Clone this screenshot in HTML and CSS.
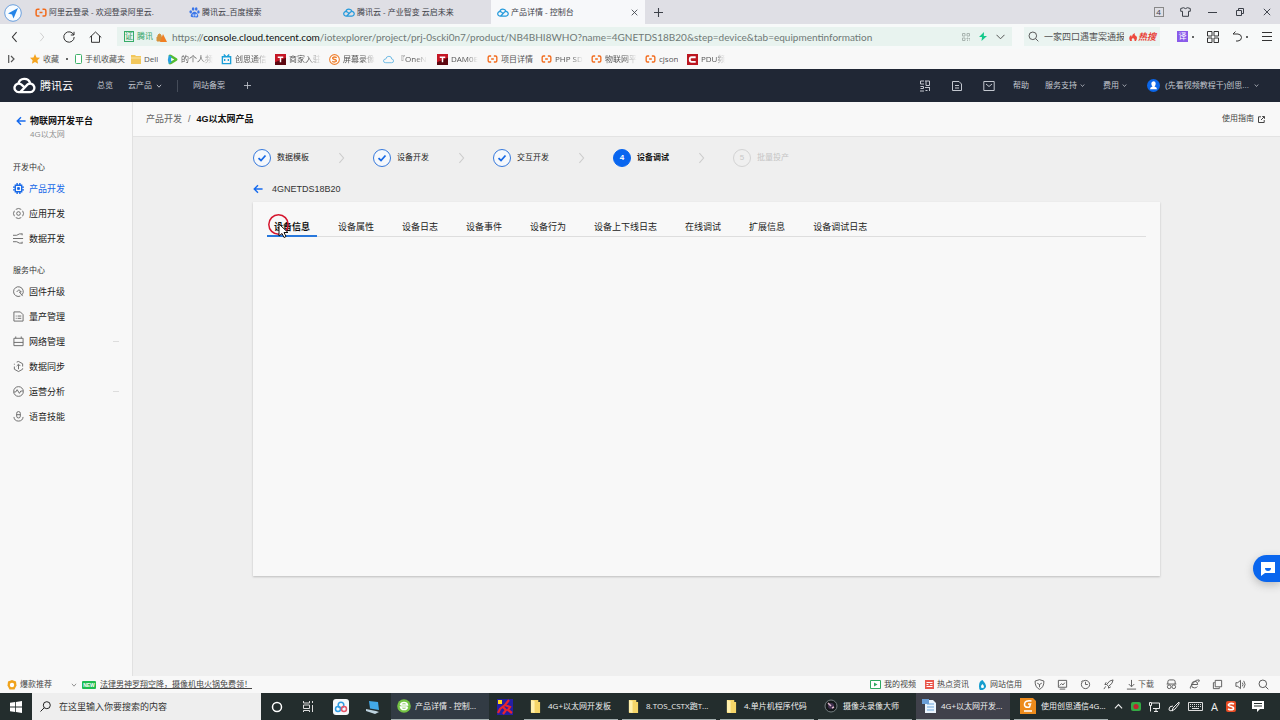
FILE: index.html
```html
<!DOCTYPE html>
<html lang="zh-CN">
<head>
<meta charset="utf-8">
<title>产品详情 - 控制台</title>
<link rel="stylesheet" href="styles.css">
</head>
<body>
<svg class="sprite" aria-hidden="true">
  <symbol id="ali" viewBox="0 0 16 12"><path d="M6 1.5H3.5Q1.5 1.5 1.5 3.5v5q0 2 2 2H6M10 1.5h2.500q2 0 2 2v5q0 2-2 2H10M6 6h4" fill="none" stroke="#f26a1b" stroke-width="2"/></symbol>
  <symbol id="cloud" viewBox="0 0 24 18"><path d="M6 16h12a4.500 4.500 0 1 0-2.500-8.300L8 15.500M6 16a4.500 4.500 0 1 1 2.500-8.200L12 11M5.500 7A6.500 6.500 0 0 1 18 6.500" fill="none" stroke="currentColor" stroke-width="2.500" stroke-linecap="round"/></symbol>
  <symbol id="paw" viewBox="0 0 16 16"><g fill="#3b76e8"><ellipse cx="2.500" cy="7" rx="1.900" ry="2.400"/><ellipse cx="6" cy="3" rx="1.900" ry="2.500"/><ellipse cx="10.500" cy="3" rx="1.900" ry="2.500"/><ellipse cx="13.700" cy="7.200" rx="1.800" ry="2.300"/><path d="M8 7c3 0 5.500 4 5.500 6s-2 2.500-5.500 2-5.500 0-5.500-2S5 7 8 7z"/></g><path d="M6 10v3h1.500M9 10v3h2v-3" fill="none" stroke="#fff"/></symbol>
  <symbol id="chev" viewBox="0 0 10 10"><path d="M1.500 3l3.500 4 3.500-4" fill="none" stroke="currentColor" stroke-width="1.500"/></symbol>
  <symbol id="next" viewBox="0 0 10 16"><path d="M2 1l6 7-6 7" fill="none" stroke="currentColor" stroke-width="1.500"/></symbol>
  <symbol id="prev" viewBox="0 0 10 16"><path d="M8 1L2 8l6 7" fill="none" stroke="currentColor" stroke-width="1.500"/></symbol>
  <symbol id="x" viewBox="0 0 10 10"><path d="M1 1l8 8M9 1L1 9" stroke="currentColor" stroke-width="1.200"/></symbol>
  <symbol id="plus" viewBox="0 0 10 10"><path d="M5 0v10M0 5h10" stroke="currentColor" stroke-width="1.200"/></symbol>
  <symbol id="find" viewBox="0 0 16 16"><circle cx="7" cy="7" r="5.500" fill="none" stroke="currentColor" stroke-width="1.400"/><path d="M11 11l4 4" stroke="currentColor" stroke-width="1.400"/></symbol>
  <symbol id="arrow" viewBox="0 0 12 12"><path d="M11.500 6H1.500M6 1.500L1.500 6 6 10.500" fill="none" stroke="currentColor" stroke-width="1.700"/></symbol>
  <symbol id="check" viewBox="0 0 12 12"><path d="M2.500 6.200L5 8.500l4.500-5" fill="none" stroke="currentColor" stroke-width="1.800"/></symbol>
  <symbol id="folder" viewBox="0 0 12 14"><path d="M1 0h8v2h2v12H1z" fill="#f5d568"/><path d="M1 0l4 1v13l-4-1z" fill="#fff0ad"/></symbol>
  <symbol id="redt" viewBox="0 0 12 12"><path d="M0 0h12v12H0z" fill="#c51625"/><path d="M0 9l12-5v8H0z" fill="#5d0710"/><path d="M3 3.500h6M6 3v6" stroke="#fff" stroke-width="1.600"/></symbol>
</svg>

<header class="tabstrip">
  <span class="avatar-logo"><svg viewBox="0 0 18 18" width="18" height="18"><circle cx="9" cy="9" r="8.300" fill="#f7fbff" stroke="#6ba0de"/><path d="M14 4L4 9.500l4 1 1.500 4z" fill="#2384e8"/></svg></span>
  <nav class="tabs">
    <a class="tab" href="#"><svg width="12" height="9"><use href="#ali"/></svg>阿里云登录 - 欢迎登录阿里云.</a>
    <a class="tab" href="#"><svg width="11" height="11"><use href="#paw"/></svg>腾讯云_百度搜索</a>
    <a class="tab blue" href="#"><svg width="12" height="9"><use href="#cloud"/></svg><span>腾讯云 - 产业智变 云启未来</span></a>
    <a class="tab blue current" href="#"><svg width="12" height="9"><use href="#cloud"/></svg><span>产品详情 - 控制台</span><svg class="close" width="7" height="7"><use href="#x"/></svg></a>
  </nav>
  <button class="cell" aria-label="新标签页"><svg width="9" height="9"><use href="#plus"/></svg></button>
  <div class="window-tools">
    <button class="cell"><span class="count">4</span></button>
    <button class="cell" aria-label="皮肤"><svg width="11" height="10" viewBox="0 0 11 10"><path d="M3.500.7L.7 1.500v2.800h1.800v5h6v-5h1.800V1.500L7.500.7Q5.500 2.500 3.500.7z" fill="none" stroke="currentColor"/></svg></button>
    <button class="cell" aria-label="最小化"><svg width="9" height="9" viewBox="0 0 9 9"><path d="M0 4.500h9" stroke="currentColor"/></svg></button>
    <button class="cell" aria-label="还原"><svg width="8" height="8" viewBox="0 0 8 8"><path d="M.5 2.500h5v5h-5zM2.500 2V.5h5v5H6" fill="none" stroke="currentColor"/></svg></button>
    <button class="cell" aria-label="关闭"><svg width="8" height="8"><use href="#x"/></svg></button>
  </div>
</header>

<div class="toolbar">
  <button class="cell" aria-label="后退"><svg width="7" height="12"><use href="#prev"/></svg></button>
  <button class="cell faint" aria-label="前进"><svg width="6" height="10"><use href="#next"/></svg></button>
  <button class="cell" aria-label="刷新"><svg width="12" height="12" viewBox="0 0 12 12"><path d="M10.800 4A5.200 5.200 0 1 0 11.200 6M11 .8V4H7.800" fill="none" stroke="currentColor"/></svg></button>
  <button class="cell" aria-label="主页"><svg width="13" height="12" viewBox="0 0 13 12"><path d="M.7 6.500L6.500 1l5.800 5.500M2.500 5v6.300h8V5" fill="none" stroke="currentColor"/></svg></button>
  <div class="address">
    <span class="cert">证</span><span class="owner">腾讯</span>
    <svg width="11" height="10" viewBox="0 0 11 10"><path d="M1 5h5v4H1zM2 5V3q1.500-2 3 0v2" fill="#d5923c" stroke="#d5923c"/><path d="M7 2l4 8H4z" fill="#f07f23"/></svg>
    <span class="url">https://<b>console.cloud.tencent.com</b>/iotexplorer/project/prj-0scki0n7/product/NB4BHI8WHO?name=4GNETDS18B20&amp;step=device&amp;tab=equipmentinformation</span>
    <span class="address-tools">
      <svg width="8" height="8" viewBox="0 0 8 8"><path d="M.5.5h2.500v2.500H.5zM5 .5h2.500v2.500H5zM.5 5h2.500v2.500H.5zM5 5h1v1H5zM7 7h1M5 7.500h1M7 5.500h1" fill="none" stroke="#a9b4b0"/></svg>
      <svg width="8" height="9" viewBox="0 0 8 9"><path d="M5 0L0 5h3L2.500 9 8 4H4.800z" fill="#16c98c"/></svg>
      <svg width="9" height="6" viewBox="0 0 9 6"><path d="M.5.8l4 4 4-4" fill="none" stroke="#555"/></svg>
    </span>
  </div>
  <label class="search"><svg width="11" height="11"><use href="#find"/></svg><input type="text" value="一家四口遇害案通报" aria-label="搜索"><span class="hot"><svg width="8" height="8" viewBox="0 0 8 8"><path d="M1 8Q-1 4 2 2l1 2Q3 1 6 0q-1 2 1 3t0 5H5.500Q6 6 4 5 2 6 3 8z" fill="#ed4a3d"/></svg>热搜</span></label>
  <div class="toolset">
    <button class="cell"><span class="translate">译</span><i class="dot"></i></button>
    <button class="cell" aria-label="应用"><svg width="12" height="12" viewBox="0 0 12 12"><path d="M.5.5h4.500v4.500H.5zM7 .5h4.500v4.500H7zM.5 7h4.500v4.500H.5zM7 7h4.500v4.500H7z" fill="none" stroke="currentColor"/></svg></button>
    <button class="cell" aria-label="恢复"><svg width="10" height="11" viewBox="0 0 10 11"><path d="M3.500.5L1 3h5q3.500.5 3.500 3.500T6 10H4" fill="none" stroke="currentColor"/></svg><i class="dot"></i></button>
    <button class="cell" aria-label="菜单"><svg width="10" height="9" viewBox="0 0 10 9"><path d="M0 .5h10M0 4.500h10M0 8.500h10" stroke="currentColor"/></svg></button>
  </div>
</div>

<nav class="bookmarks">
  <span class="expand"><svg width="7" height="8" viewBox="0 0 7 8"><path d="M.7 0v8M3 1l3 3-3 3" fill="none" stroke="currentColor" stroke-width="1.200"/></svg></span>
  <a class="bm w45" href="#"><svg width="10" height="10" viewBox="0 0 10 10"><path d="M5 0l1.500 3.400 3.500.4-2.600 2.400.7 3.600L5 8 1.900 9.800l.7-3.600L0 3.800l3.500-.4z" fill="#f5a41f"/></svg><span>收藏</span><i class="dot"></i></a>
  <a class="bm w56" href="#"><svg width="7" height="10" viewBox="0 0 7 10"><rect x=".5" y=".5" width="6" height="9" rx="1" fill="#fff" stroke="#40b26a"/></svg><span>手机收藏夹</span></a>
  <a class="bm w36" href="#"><svg width="10" height="9" viewBox="0 0 10 9"><path d="M0 0h4l1 1h5v8H0z" fill="#f2c75c"/><path d="M0 3h10" stroke="#fbe5a4"/></svg><span>Dell</span></a>
  <a class="bm" href="#"><svg width="11" height="11" viewBox="0 0 12 12"><path d="M2 1q1-1 3 0l6 4q1 1 0 2l-6 4q-2 1-3 0z" fill="#55bd30"/><path d="M2 1Q0 6 2 11l3-2V3z" fill="#289fe0"/><path d="M4.500 4L8 6 4.500 8z" fill="#fff"/></svg><span class="fade">的个人频</span></a>
  <a class="bm" href="#"><svg width="11" height="11" viewBox="0 0 12 12"><path d="M3 .5l2 2M9 .5l-2 2M1.500 3h9v7.500h-9zM4 5.500v2M8 5.500v2" fill="none" stroke="#1b9fd8" stroke-width="1.500"/></svg><span class="fade">创思通信</span></a>
  <a class="bm" href="#"><svg width="11" height="11"><use href="#redt"/></svg><span class="fade">商家入驻</span></a>
  <a class="bm" href="#"><svg width="11" height="11" viewBox="0 0 12 12"><circle cx="6" cy="6" r="5.300" fill="#fff" stroke="#ee8131" stroke-width="1.200"/><path d="M8.500 4Q6 2.500 4 4q-.5 1.500 2 2t2 2Q6 9.500 3.500 8" fill="none" stroke="#ee8131" stroke-width="1.400"/></svg><span class="fade">屏幕录像</span></a>
  <a class="bm" href="#"><svg width="11" height="9" viewBox="0 0 12 9"><path d="M3 8Q.5 8 .5 6T3 4q.5-3 3.500-3T9.500 4q2 0 2 2t-2 2z" fill="none" stroke="#68b7e3"/></svg><span class="fade">『OneN</span></a>
  <a class="bm w50" href="#"><svg width="11" height="11"><use href="#redt"/></svg><span class="fade">DAM0E</span></a>
  <a class="bm" href="#"><svg width="11" height="8"><use href="#ali"/></svg><span>项目详情</span></a>
  <a class="bm w50" href="#"><svg width="11" height="8"><use href="#ali"/></svg><span class="fade">PHP SD</span></a>
  <a class="bm" href="#"><svg width="11" height="8"><use href="#ali"/></svg><span class="fade">物联网平</span></a>
  <a class="bm w42" href="#"><svg width="11" height="8"><use href="#ali"/></svg><span>cjson</span></a>
  <a class="bm w50" href="#"><svg width="11" height="11" viewBox="0 0 12 12"><path d="M0 0h12v12H0z" fill="#bb1620"/><path d="M9.500 3.500H5Q3 3.500 3 6t2 2.500h4.500" fill="none" stroke="#fff" stroke-width="2"/></svg><span class="fade">PDU频</span></a>
</nav>

<header class="console">
  <a class="brand" href="#"><svg width="23" height="17"><use href="#cloud"/></svg>腾讯云</a>
  <nav class="console-nav">
    <a href="#">总览</a>
    <a href="#">云产品<svg width="6" height="6"><use href="#chev"/></svg></a>
    <span class="bar"></span>
    <a href="#">网站备案</a>
    <a class="more" href="#" aria-label="添加"><svg width="7" height="7"><use href="#plus"/></svg></a>
  </nav>
  <div class="account">
    <a class="pic" href="#"><svg width="12" height="12" viewBox="0 0 12 12"><path d="M5 1H1.500v3H5M1.500 6.500h3v2h-3M1 11h4M6 1h4.500v4.500H7V1M6 7.500h5M10.500 8v3M6.500 10.500h2" fill="none" stroke="currentColor"/></svg></a>
    <a class="pic" href="#"><svg width="12" height="12" viewBox="0 0 12 12"><path d="M1.500 1.500H8L10.500 4v6.500h-9zM4 5.500h4M4 8h4" fill="none" stroke="currentColor"/></svg></a>
    <a class="pic" href="#"><svg width="12" height="12" viewBox="0 0 12 12"><path d="M.8 1.500h10.400v9H.8zM3 4l3 2.500L9 4" fill="none" stroke="currentColor"/></svg></a>
    <a href="#">帮助</a>
    <a class="support" href="#">服务支持<svg width="5" height="5"><use href="#chev"/></svg></a>
    <a class="cost" href="#">费用<svg width="5" height="5"><use href="#chev"/></svg></a>
    <a class="user" href="#"><svg width="13" height="13" viewBox="0 0 13 13"><circle cx="6.500" cy="6.500" r="6.500" fill="#0b66e8"/><path d="M6.500 2.200q2.200 0 2.200 2.300T7.500 7.400Q10 8 10 10.200H3Q3 8 5.500 7.400 4.300 6.500 4.300 4.500T6.500 2.200z" fill="#fff"/></svg>(先看视频教程干)创思...<svg width="5" height="5"><use href="#chev"/></svg></a>
  </div>
</header>

<div class="workspace">
  <aside class="sidebar">
    <a class="platform" href="#"><svg width="10" height="10"><use href="#arrow"/></svg>物联网开发平台</a>
    <p class="project">4G以太网</p>
    <h2>开发中心</h2>
    <ul>
      <li><a class="on" href="#"><svg viewBox="0 0 12 12"><path d="M2.500 2.500h7v7h-7zM4.500 0v2M7.500 0v2M4.500 10v2M7.500 10v2M0 4.500h2M0 7.500h2M10 4.500h2M10 7.500h2" fill="none" stroke="currentColor" stroke-width="1.500"/><path d="M5 5h2v2H5z" fill="currentColor"/></svg>产品开发</a></li>
      <li><a href="#"><svg viewBox="0 0 12 12"><circle cx="6" cy="6" r="2"/><path d="M3 1.500Q6-.5 9 1.500M3 10.500q3 2 6 0M1.500 3Q-.5 6 1.500 9M10.500 3q2 3 0 6"/></svg>应用开发</a></li>
      <li><a href="#"><svg viewBox="0 0 12 12"><path d="M0 2.500h4L7 1h3M0 6h11M0 9.500h4L7 11h3M10 .5v2M10 9.500v2"/></svg>数据开发</a></li>
    </ul>
    <h2>服务中心</h2>
    <ul>
      <li><a href="#"><svg viewBox="0 0 12 12"><path d="M10 9.500A5.300 5.300 0 1 0 8 11M4 6.500L6.500 4 9 6.500H7L10.500 11"/></svg>固件升级</a></li>
      <li><a href="#"><svg viewBox="0 0 12 12"><path d="M1 1h7l3 3v7H1zM3 5.500h1M5 5.500h4M3 8h1M5 8h4"/></svg>量产管理</a></li>
      <li><a href="#"><svg viewBox="0 0 12 12"><path d="M1 2.500h10v8H1zM3 .5v2M9 .5v2M1 7h10"/></svg>网络管理<i></i></a></li>
      <li><a href="#"><svg viewBox="0 0 12 12"><path d="M4 1.200L6 .5l4.500 2.500v3M10.500 8v1L6 11.500 1.500 9V6M1.500 4V3M6 9V4M4 5.500l2-2 2 2"/></svg>数据同步</a></li>
      <li><a href="#"><svg viewBox="0 0 12 12"><circle cx="6" cy="6" r="5.300"/><path d="M1 6.500h2L4.500 4 7 8l1.500-2.500H11"/></svg>运营分析<i></i></a></li>
      <li><a href="#"><svg viewBox="0 0 12 12"><rect x="4" y=".6" width="4" height="7" rx="2"/><path d="M1 6.500Q1.500 11 6 11t5-4.500M4 4h4"/></svg>语音技能</a></li>
    </ul>
  </aside>

  <main>
    <div class="crumbs"><a href="#">产品开发</a><span>/</span><strong>4G以太网产品</strong><a class="guide" href="#">使用指南<svg width="7" height="7" viewBox="0 0 7 7"><path d="M3 .8H.5v5.700h5.700V4M3 4L6.200.8M4.200.5h2.300v2.300" fill="none" stroke="currentColor"/></svg></a></div>
    <div class="content">
      <ol class="steps">
        <li><span class="ring"><svg width="12" height="12"><use href="#check"/></svg></span>数据模板<svg class="sep" width="7" height="12"><use href="#next"/></svg></li>
        <li><span class="ring"><svg width="12" height="12"><use href="#check"/></svg></span>设备开发<svg class="sep" width="7" height="12"><use href="#next"/></svg></li>
        <li><span class="ring"><svg width="12" height="12"><use href="#check"/></svg></span>交互开发<svg class="sep" width="7" height="12"><use href="#next"/></svg></li>
        <li class="active"><span class="ring">4</span>设备调试<svg class="sep" width="7" height="12"><use href="#next"/></svg></li>
        <li class="pending"><span class="ring">5</span>批量投产</li>
      </ol>
      <a class="device" href="#"><svg width="10" height="10"><use href="#arrow"/></svg>4GNETDS18B20</a>
      <section class="card">
        <nav class="card-tabs">
          <a class="selected" href="#">设备信息<svg class="pointer" width="24" height="26" viewBox="0 0 24 26"><circle cx="11.500" cy="11.500" r="9.700" fill="none" stroke="#d5152d" stroke-width="1.500"/><path d="M12 11v12l3-2.500 2 4 2-1-2-4h4z" fill="#fff" stroke="#111"/></svg></a>
          <a href="#">设备属性</a><a href="#">设备日志</a><a href="#">设备事件</a><a href="#">设备行为</a><a href="#">设备上下线日志</a><a href="#">在线调试</a><a href="#">扩展信息</a><a href="#">设备调试日志</a>
        </nav>
      </section>
    </div>
    <button class="chat" aria-label="在线咨询"><svg width="14" height="14" viewBox="0 0 14 14"><path d="M0 0h14v11H4l-4 3z" fill="#fff"/><path d="M4 6h6q0 3-3 3T4 6z" fill="#0a66ee"/></svg></button>
  </main>
</div>

<footer class="statusbar">
  <a class="promo" href="#"><svg width="10" height="10" viewBox="0 0 10 10"><path d="M5 0l4 1.500.5 4L7.500 9.500h-5L.5 5.500 1 1.500z" fill="#f0a31c"/><circle cx="5" cy="5" r="2.200" fill="#fff"/></svg>爆款推荐</a>
  <svg class="fold" width="6" height="6"><use href="#chev"/></svg>
  <span class="new">NEW</span><a class="news" href="#">法律男神罗翔空降，摄像机电火锅免费领！</a>
  <div class="status-right">
    <a class="labelled" href="#"><svg width="11" height="9" viewBox="0 0 11 9"><path d="M.5.5h10v8H.5z" fill="#fff" stroke="#2fa960"/><path d="M4 2.500l3.500 2L4 6.500z" fill="#2fa960"/></svg>我的视频</a>
    <a class="labelled" href="#"><svg width="9" height="9" viewBox="0 0 9 9"><path d="M0 0h9v9H0z" fill="#e9574c"/><path d="M1.500 2.500h6M1.500 4.500h2M5 4.500h2.500M1.500 6.500h6" stroke="#fff"/></svg>热点资讯</a>
    <a class="labelled" href="#"><svg width="9" height="10" viewBox="0 0 9 10"><path d="M4.500 0Q8 4 8 6.200T4.500 10 1 6.200 4.500 0z" fill="#169dce"/><path d="M4.500 4Q6 5.500 6 6.700T4.500 8 3 6.700 4.500 4z" fill="#fff"/></svg>网站信用</a>
    <div class="status-icons">
      <svg viewBox="0 0 12 12"><path d="M6 .7l4.800 1.500Q11 9 6 11.300 1 9 1.200 2.200zM3.500 4.500L6 6l2.500-1.500M6 6v3"/></svg>
      <svg viewBox="0 0 12 12"><path d="M1.500 1.500h9v7.500h-9zM3 7l2-2 1.500 1.500L8.500 4M3 11h6"/></svg>
      <svg viewBox="0 0 12 12"><circle cx="6" cy="6" r="4.500"/><path d="M6 3v3h2.500M3 1.500L1.500 3"/></svg>
      <svg viewBox="0 0 12 12"><path d="M11 1Q7 1 4 6l2 2q5-3 5-7zM4 6H2l1.500-2.500M6 8v2l2.500-1.500M3 8l-2 3"/></svg>
      <a class="download" href="#"><svg viewBox="0 0 12 12"><path d="M6 1v7M3 5.500l3 3 3-3M1 11h10"/></svg>下载</a>
      <svg viewBox="0 0 12 12"><path d="M2 5.500V3Q2 1 4 1h4q2 0 2 2v2.500M.7 5.500h10.600"/><circle cx="3.500" cy="8.500" r="2"/><circle cx="8.500" cy="8.500" r="2"/></svg>
      <svg viewBox="0 0 12 12"><path d="M3 6h6.500Q9.500 2.500 6.300 2.500T2.800 6.300t3.400 3.400q2 0 3-1.500M2 10.500Q0 10 4 5t7-4q1 1-1 2.500"/></svg>
      <svg viewBox="0 0 12 12"><path d="M3.500 1.500h7v7h-7zM3 4H1.500v6.500H8V9"/></svg>
      <svg viewBox="0 0 12 12"><path d="M1 4h2l3-2.500v9L3 8H1zM8 4q1.500 2 0 4M9.500 2q3 4 0 8"/></svg>
      <svg><use href="#find"/></svg>
    </div>
  </div>
</footer>

<footer class="taskbar">
  <button class="slot" aria-label="开始"><svg width="12" height="12" viewBox="0 0 12 12"><path d="M0 1.700L5.200 1v4.600H0zM6 .9L12 0v5.600H6zM0 6.400h5.200V11L0 10.300zM6 6.400h6V12l-6-.9z" fill="#fff"/></svg></button>
  <label class="task-search"><svg width="11" height="11" viewBox="0 0 11 11"><circle cx="6.800" cy="4.200" r="3.500" fill="none" stroke="#222"/><path d="M4.300 6.700L.5 10.500" stroke="#222"/></svg><input type="text" placeholder="在这里输入你要搜索的内容" aria-label="搜索"></label>
  <button class="slot" aria-label="Cortana"><svg width="12" height="12" viewBox="0 0 12 12"><circle cx="6" cy="6" r="4.500" fill="none" stroke="#fff" stroke-width="1.500"/></svg></button>
  <button class="slot" aria-label="任务视图"><svg width="12" height="11" viewBox="0 0 12 11"><path d="M.5 0v2h6V0M.5 4h6v3.500h-6zM.5 11V9.500h6V11M9.500 0v2M9.500 4v7" fill="none" stroke="#ddd"/></svg></button>
  <button class="slot" aria-label="网盘"><svg width="16" height="16" viewBox="0 0 16 16"><rect width="16" height="16" rx="3" fill="#f5f8fb"/><circle cx="8" cy="6" r="2.800" fill="none" stroke="#2f9de5" stroke-width="1.500"/><circle cx="5" cy="10" r="2.500" fill="none" stroke="#2f9de5" stroke-width="1.500"/><circle cx="11" cy="10" r="2.500" fill="none" stroke="#e65468" stroke-width="1.500"/></svg></button>
  <button class="slot" aria-label="电脑"><svg width="16" height="14" viewBox="0 0 16 14"><path d="M4 1l9 1 1 8-9-1.500z" fill="#42a9e9"/><path d="M1 9l10 2 3 1-4 2-9-3z" fill="#bed3df"/></svg></button>
  <button class="app browser"><svg width="14" height="14" viewBox="0 0 14 14"><circle cx="7" cy="7" r="6.800" fill="#75c344"/><path d="M3.500 6Q4 3.500 7 3.500T10.500 6h-7M10.500 8q-.5 2.500-3.500 2.500T3.500 8h7" fill="none" stroke="#fff" stroke-width="1.500"/></svg><span>产品详情 - 控制...</span></button>
  <button class="slot" aria-label="工具"><svg width="16" height="16" viewBox="0 0 16 16"><path d="M0 0h16v16H0z" fill="#2520a4"/><path d="M1 1h4v4H1z" fill="#ffda1a"/><path d="M12 1L8 6l5 2-2 3 4 3M8 6L3 10l-2 4M6 8l3 3-3 4" fill="none" stroke="#e8242e" stroke-width="2.200"/></svg></button>
  <div class="apps">
    <button class="app folder"><svg width="11" height="13"><use href="#folder"/></svg><span>4G+以太网开发板</span></button>
    <button class="app folder"><svg width="11" height="13"><use href="#folder"/></svg><span>8.TOS_CSTX跑T...</span></button>
    <button class="app folder"><svg width="11" height="13"><use href="#folder"/></svg><span>4.单片机程序代码</span></button>
    <button class="app"><svg width="14" height="14" viewBox="0 0 14 14"><circle cx="7" cy="7" r="6" fill="#15191b" stroke="#747e80"/><circle cx="7" cy="7" r="3" fill="#423151"/><path d="M4 4l3 3M8 9l2-1" stroke="#dfbacb" stroke-width="1.500"/></svg><span>摄像头录像大师</span></button>
    <button class="app focus"><svg width="14" height="15" viewBox="0 0 14 15"><path d="M3 1h8l3 3v10H3z" fill="#eaf4fd"/><path d="M5 5h7M5 8h7M5 11h7" stroke="#6ba5dc"/><path d="M0 0h7v5H0z" fill="#6a9dd5"/></svg><span>4G+以太网开发...</span></button>
    <button class="app"><svg width="16" height="16" viewBox="0 0 16 16"><path d="M0 0h13l3 3v13H0z" fill="#ed8b1c"/><path d="M11.500 3Q5 2 4.500 6t5 3l1-3H8M4 13h8" fill="none" stroke="#fff" stroke-width="1.500"/></svg><span>使用创思通信4G...</span></button>
  </div>
  <div class="tray">
    <svg width="9" height="9" viewBox="0 0 10 10"><path d="M1 7l4-4 4 4" fill="none" stroke="#eee" stroke-width="1.300"/></svg>
    <svg width="10" height="9" viewBox="0 0 10 9"><rect width="10" height="9" rx="2" fill="#35a944"/><circle cx="5" cy="4.500" r="2.600" fill="#bf2430"/></svg>
    <svg width="11" height="10" viewBox="0 0 11 10"><path d="M3 1h7.500v5.500H4M.5.5h2v3h-2zM1.500 4v5.500M5 9.500h4M7 7v2" fill="none" stroke="#eee"/></svg>
    <svg width="12" height="11" viewBox="0 0 12 11"><path d="M11 1L5 7l-1 3 3-2 4-5zM5 5Q1 5 1 8t4 1" fill="none" stroke="#eee"/></svg>
    <svg width="15" height="9" viewBox="0 0 15 9"><path d="M.5.5h14v8H.5z" fill="none" stroke="#ddd"/><path d="M2 2.500h11M2 4.500h11" stroke="#ddd" stroke-dasharray="1 1"/><path d="M4 6.500h7" stroke="#ddd"/></svg>
    <span class="ime">A</span>
    <svg width="10" height="11" viewBox="0 0 10 11"><rect width="10" height="11" rx="2" fill="#e84b23"/><path d="M8 3Q5 1.500 2.500 3.500 2 5 5 5.500T7.500 8Q5 9.500 2 8" fill="none" stroke="#fff" stroke-width="1.600"/></svg>
    <svg class="notice" width="12" height="11" viewBox="0 0 12 11"><path d="M0 0h12v8H8l-3 3V8H0z" fill="#fff"/><path d="M2 2.500h8M2 5h8" stroke="#26302f"/></svg>
  </div>
</footer>
</body>
</html>
```

FILE: styles.css
```css
* { box-sizing: border-box; }
body {
  margin: 0;
  min-height: 100vh;
  display: flex;
  flex-direction: column;
  background: #efefef;
  color: #333;
  font: 8px/12px "Liberation Sans", "Noto Sans CJK SC", sans-serif;
  white-space: nowrap;
}
a { color: inherit; text-decoration: none; }
button, input { font: inherit; color: inherit; border: 0; padding: 0; background: none; outline: 0; }
svg { flex: none; display: block; }
ul, ol, h2, p { margin: 0; padding: 0; list-style: none; }
.sprite { display: none; }
.tabstrip, .bookmarks, .taskbar { font-family: "Open Sans", "Noto Sans CJK SC", sans-serif; }
.cell { width: 27px; height: 24px; display: flex; align-items: center; justify-content: center; gap: 4px; flex: none; }
.dot { width: 2px; height: 2px; border-radius: 1px; background: #333; flex: none; }

/* Browser tabs */
.tabstrip { display: flex; height: 24px; background: #dfdfe5; color: #3c4048; }
.avatar-logo { width: 29px; padding: 4px 0 0 4px; }
.tabs { display: flex; }
.tab { width: 154px; padding: 0 6px; display: flex; align-items: center; gap: 2px; }
.tab.current { background: #f7f8fa; }
.blue > svg:first-child { color: #269bdc; }
.close { margin-left: auto; margin-right: 1px; }
.window-tools { display: flex; margin-left: auto; }
.count { width: 10px; height: 10px; line-height: 8px; border: 1px solid #888; text-align: center; }

/* Address row */
.toolbar { display: flex; align-items: center; height: 25px; padding-left: 1px; background: #f7f9f9; }
.faint { color: #ccc; }
.address { flex: 1; min-width: 0; height: 19px; margin-left: 8px; padding: 0 7px; display: flex; align-items: center; gap: 3px; background: #e8f3ef; }
.cert { width: 10px; height: 11px; line-height: 9px; border: 1px solid #36ac68; color: #249a57; text-align: center; }
.owner { color: #36a56a; }
.url { margin-left: 2px; font: 10px/16px Lato, sans-serif; color: #6f7976; }
.url b { font-weight: 400; color: #111; }
.address-tools { display: flex; align-items: center; gap: 9px; margin-left: auto; }
.search { width: 136px; height: 19px; margin-left: 12px; padding: 0 4px; display: flex; align-items: center; gap: 5px; background: #eaf4f1; color: #555; }
.search input { flex: 1; width: 0; font-size: 9px; }
.hot { display: flex; align-items: center; gap: 1px; color: #e83e35; font-size: 9px; font-weight: 700; font-style: italic; }
.toolset { display: flex; margin-left: 12px; }
.translate { width: 11px; height: 11px; line-height: 11px; background: #8a5bea; color: #fff; }

/* Bookmarks */
.bookmarks { display: flex; align-items: center; height: 20px; background: #f8f8f8; color: #555; }
.expand { width: 30px; padding-left: 8px; }
.bm { width: 54px; padding-right: 8px; display: flex; align-items: center; gap: 3px; }
.bm span { overflow: hidden; }
.bm .fade { mask-image: linear-gradient(90deg, #000 60%, transparent); }
.bm .dot { margin-left: 4px; }
.w36 { width: 36px; }
.w42 { width: 42px; }
.w45 { width: 45px; }
.w50 { width: 50px; }
.w56 { width: 56px; }
.w36, .w42, .w45, .w50, .w56 { padding-right: 0; }

/* Console header */
.console { display: flex; align-items: center; height: 33px; padding: 0 21px 0 13px; background: #202735; color: #c3c7cf; }
.brand { display: flex; align-items: center; gap: 4px; font-size: 11px; color: #fff; }
.console-nav { display: flex; align-items: center; gap: 15px; margin-left: 24px; }
.console-nav a, .account a { display: flex; align-items: center; gap: 3px; }
.console-nav a svg { margin-left: 1px; }
.bar { width: 1px; height: 12px; background: #454c59; }
.more { margin-left: 3px; }
.account { display: flex; align-items: center; gap: 16px; margin-left: auto; }
.account .pic { width: 16px; justify-content: center; }
.account .user { gap: 5px; }
.support { margin-right: 2px; }
.cost { margin-right: 4px; }

/* Sidebar */
.workspace { flex: 1; display: flex; min-height: 0; }
.sidebar { width: 133px; padding: 13px 13px 0; background: #f8f8f8; border-right: 1px solid #e1e1e1; flex: none; }
.platform { display: flex; align-items: center; gap: 4px; padding-left: 3px; font-size: 9px; font-weight: 700; color: #111; }
.platform svg { color: #176bee; }
.project { padding: 2px 0 0 17px; color: #909090; }
.sidebar h2 { font-size: 8px; font-weight: 400; line-height: 12px; padding-top: 21px; color: #333; height: 35px; }
.sidebar ul + h2 { padding-top: 14px; height: 28px; }
.sidebar li a { display: flex; align-items: center; gap: 5px; height: 25px; font-size: 9px; color: #222; }
.sidebar li svg { width: 11px; height: 11px; fill: none; stroke: currentColor; color: #666; overflow: visible; }
.sidebar li a.on, .sidebar li a.on svg { color: #1668e8; }
.sidebar i { width: 6px; height: 1px; background: #ddd; margin-left: auto; }

/* Main area */
main { flex: 1; min-width: 0; display: flex; flex-direction: column; }
.crumbs { display: flex; align-items: center; height: 35px; padding: 0 15px 0 13px; gap: 6px; font-size: 9px; background: #f8f8f8; border-bottom: 1px solid #e3e3e3; color: #666; }
.crumbs strong { color: #111; }
.guide { display: flex; align-items: center; gap: 4px; margin-left: auto; font-size: 8px; color: #444; }
.content { flex: 1; display: flex; flex-direction: column; padding: 11px 120px 100px; }
.steps { display: flex; }
.steps li { width: 120px; height: 20px; display: flex; align-items: center; gap: 6px; color: #222; }
.ring { width: 18px; height: 18px; border: 1px solid #3679dc; border-radius: 50%; display: flex; align-items: center; justify-content: center; color: #1769e6; background: #f5f8fc; }
.sep { color: #ccc; margin-left: auto; margin-right: 28px; }
.steps .active { font-weight: 700; color: #111; }
.active .ring { background: #0966ef; border-color: #0966ef; color: #fff; }
.steps .pending { color: #c4c4c4; }
.pending .ring { border-color: #d3d3d3; color: #c8c8c8; background: none; }
.device { display: flex; align-items: center; gap: 9px; height: 24px; margin: 9px 0 1px; font-size: 9px; color: #333; }
.device svg { color: #176bee; }
.card { flex: 1; padding: 12px 14px; background: #f8f8f8; box-shadow: 0 1px 2px #bdbdbd; }
.card-tabs { display: flex; gap: 14px; height: 23px; border-bottom: 1px solid #dedede; font-size: 9px; color: #222; }
.card-tabs a { padding: 0 7px; line-height: 27px; }
.card-tabs .selected { position: relative; font-weight: 700; color: #111; border-bottom: 2px solid #2878dc; height: 23px; }
.pointer { position: absolute; left: 0; top: -1px; }
.chat { position: absolute; right: 0; top: 555px; width: 27px; height: 27px; padding-left: 8px; background: #0a66ee; border-radius: 14px 0 0 14px; box-shadow: 0 3px 8px #bbb; }

/* Browser status bar */
.statusbar { display: flex; align-items: center; height: 17px; padding: 0 11px 0 7px; background: #f8f8f8; color: #444; }
.promo, .labelled, .download { display: flex; align-items: center; gap: 3px; }
.fold { margin: 0 5px 0 19px; color: #888; }
.new { width: 14px; height: 8px; margin-right: 4px; border-radius: 1px; background: #1dbd51; color: #fff; font-size: 5px; line-height: 8px; font-weight: 700; text-align: center; }
.news { text-decoration: underline; }
.status-right { display: flex; align-items: center; gap: 9px; margin-left: auto; }
.status-icons { display: flex; align-items: center; gap: 12px; margin-left: 3px; color: #555; }
.status-icons svg { width: 11px; height: 11px; fill: none; stroke: currentColor; }
.download { gap: 1px; }

/* Taskbar */
.taskbar { display: flex; height: 27px; background: #232d2d; color: #f0f0f0; }
.slot { width: 32px; display: flex; align-items: center; justify-content: center; flex: none; }
.task-search { width: 229px; display: flex; align-items: center; gap: 8px; padding-left: 8px; background: #eee; color: #333; }
.task-search input { flex: 1; width: 0; font-size: 9px; }
.task-search input::placeholder { color: #333; opacity: 1; }
.app { width: 94px; display: flex; align-items: center; gap: 5px; padding-left: 6px; border-bottom: 1px solid #a5b0b0; }
.folder { gap: 7px; }
.browser { width: 98px; margin-left: 2px; background: #323b44; gap: 4px; }
.focus { background: #40414b; }
.apps { display: flex; gap: 4px; margin-left: 3px; }
.tray { flex: 1; display: flex; align-items: center; justify-content: space-between; padding: 0 16px 0 6px; }
.ime { font-size: 11px; }
.notice { margin-left: 8px; }
```
